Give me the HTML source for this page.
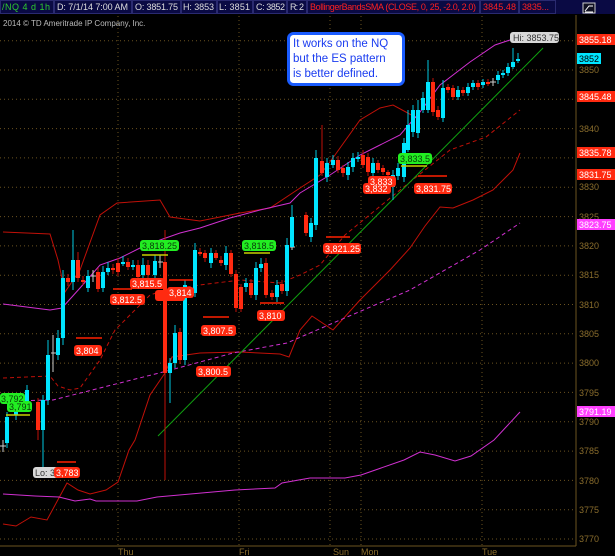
<!DOCTYPE html>
<html><head><meta charset="utf-8"><style>
html,body{margin:0;padding:0;background:#000;width:615px;height:556px;overflow:hidden}
svg{display:block;font-family:"Liberation Sans",sans-serif}
</style></head><body>
<svg width="615" height="556" xmlns="http://www.w3.org/2000/svg">
<rect width="615" height="556" fill="#000"/>
<!-- header -->
<rect x="0" y="0" width="615" height="14" fill="#0a0a44"/>
<g fill="none" stroke="#2a2a70"><rect x="0.5" y="0.5" width="53" height="13"/><rect x="54.5" y="0.5" width="77" height="13"/><rect x="132.5" y="0.5" width="48" height="13"/><rect x="181.5" y="0.5" width="35" height="13"/><rect x="217.5" y="0.5" width="35" height="13"/><rect x="253.5" y="0.5" width="33" height="13"/><rect x="287.5" y="0.5" width="19" height="13"/><rect x="307.5" y="0.5" width="172" height="13"/><rect x="480.5" y="0.5" width="38" height="13"/><rect x="519.5" y="0.5" width="36" height="13"/></g>
<g font-size="9" fill="#ddd">
<text x="2" y="10" fill="#2ecc2e" textLength="48">/NQ 4 d 1h</text>
<text x="57" y="10" textLength="71">D: 7/1/14 7:00 AM</text>
<text x="135" y="10" textLength="43">O: 3851.75</text>
<text x="183" y="10" textLength="31">H: 3853</text>
<text x="219" y="10" textLength="31">L: 3851</text>
<text x="256" y="10" textLength="29">C: 3852</text>
<text x="290" y="10" textLength="14">R: 2</text>
<text x="310" y="10" fill="#ff2020" textLength="166">BollingerBandsSMA (CLOSE, 0, 25, -2.0, 2.0)</text>
<text x="483" y="10" fill="#ff2020" textLength="33">3845.48</text>
<text x="522" y="10" fill="#ff2020" textLength="27">3835...</text>
</g>
<rect x="583" y="3" width="12" height="10" fill="#112" stroke="#ccc" stroke-width="1"/>
<path d="M585 11 L589 6 L593 6 M585 12 H593" stroke="#fff" fill="none"/>
<text x="3" y="26" font-size="8" fill="#bbb">2014 © TD Ameritrade IP Company, Inc.</text>
<!-- grid -->
<g stroke="#6b5320" stroke-width="1" stroke-dasharray="1,3">
<line x1="118" y1="16" x2="118" y2="546"/><line x1="239" y1="16" x2="239" y2="546"/><line x1="330" y1="16" x2="330" y2="546"/><line x1="361" y1="16" x2="361" y2="546"/><line x1="482" y1="16" x2="482" y2="546"/>
<line x1="0" y1="40.7" x2="576" y2="40.7"/><line x1="0" y1="70" x2="576" y2="70"/><line x1="0" y1="99.3" x2="576" y2="99.3"/><line x1="0" y1="128.6" x2="576" y2="128.6"/><line x1="0" y1="157.9" x2="576" y2="157.9"/><line x1="0" y1="187.3" x2="576" y2="187.3"/><line x1="0" y1="216.6" x2="576" y2="216.6"/><line x1="0" y1="245.9" x2="576" y2="245.9"/><line x1="0" y1="275.2" x2="576" y2="275.2"/><line x1="0" y1="304.5" x2="576" y2="304.5"/><line x1="0" y1="333.8" x2="576" y2="333.8"/><line x1="0" y1="363.1" x2="576" y2="363.1"/><line x1="0" y1="392.4" x2="576" y2="392.4"/><line x1="0" y1="421.8" x2="576" y2="421.8"/><line x1="0" y1="451.1" x2="576" y2="451.1"/><line x1="0" y1="480.4" x2="576" y2="480.4"/><line x1="0" y1="509.7" x2="576" y2="509.7"/><line x1="0" y1="539" x2="576" y2="539"/>
</g>
<g font-size="9" fill="#8a6d2c">
<text x="579" y="73">3850</text><text x="579" y="132">3840</text><text x="579" y="190">3830</text><text x="579" y="220">3825</text><text x="579" y="249">3820</text><text x="579" y="278">3815</text><text x="579" y="308">3810</text><text x="579" y="337">3805</text><text x="579" y="366">3800</text><text x="579" y="396">3795</text><text x="579" y="425">3790</text><text x="579" y="454">3785</text><text x="579" y="484">3780</text><text x="579" y="513">3775</text><text x="579" y="542">3770</text>
<text x="118" y="555">Thu</text><text x="239" y="555">Fri</text><text x="333" y="555">Sun</text><text x="361" y="555">Mon</text><text x="482" y="555">Tue</text>
</g>
<line x1="576" y1="15" x2="576" y2="546" stroke="#6b5320"/>
<line x1="0" y1="546" x2="576" y2="546" stroke="#6b5320"/>
<!-- bands -->
<g fill="none" stroke-width="1">
<polyline stroke="#c01008" points="3,232 50,234 58,260 65,292 80,270 100,215 117,203 160,200 170,217 200,221 240,213 270,208 300,188 320,175 335,155 360,120 380,108 393,105 417,118"/>
<polyline stroke="#c01008" points="3,524 16,526 31,517 47,520 67,483 78,490 90,494 106,490 118,482 129,450 135,440 150,395 165,373 172,357 200,353 240,352 280,354 289,357 300,330 312,316 333,330 360,300 390,270 410,248 425,226 440,207 453,208 473,200 493,190 513,170 520,153"/>
<polyline stroke="#c01008" stroke-dasharray="4,3" points="3,378 50,376 58,386 70,390 80,388 100,360 115,330 150,295 165,290 200,285 240,280 280,283 300,275 320,265 345,235 400,190 450,150 486,137 520,110"/>
<polyline stroke="#d030d0" points="3,304 50,310 62,308 80,288 100,265 120,258 140,248 160,240 180,233 200,228 230,218 260,210 290,203 300,193 330,175 360,155 380,145 400,135 420,112 440,85 470,62 495,45 510,40"/>
<polyline stroke="#d030d0" stroke-dasharray="4,3" points="3,401 53,400 100,388 167,371 233,353 287,343 347,317 410,290 480,250 520,223"/>
<polyline stroke="#d030d0" points="3,494 35,496 59,497 75,501 90,499 96,501 137,501 157,497 235,490 275,488 282,483 310,478 322,478 345,478 361,475 404,460 420,452 435,455 455,461 471,456 494,440 520,412"/>
<line x1="158" y1="436" x2="543" y2="48" stroke="#10a010"/>
</g>
<!-- wicks -->
<g stroke-width="1">
<path stroke="#00c8e0" d="M7 412V448 M16 398V420 M27 385V412 M43 395V470 M48 340V405 M58 330V360 M63 270V345 M73 230V290 M88 270V292 M103 266V292 M108 262V275 M123 256V266 M133 260V270 M143 258V280 M155 255V280 M170 358V403 M175 325V368 M185 280V365 M195 243V297 M211 248V268 M226 246V270 M246 278V292 M256 262V300 M261 258V272 M277 280V302 M287 238V296 M292 205V250 M311 218V242 M316 150V230 M327 158V182 M333 155V168 M348 162V180 M353 153V172 M358 152V162 M373 158V178 M393 170V200 M398 163V180 M404 138V182 M408 110V152 M413 105V137 M418 100V138 M423 92V113 M428 60V113 M443 80V122 M458 86V100 M468 83V96 M473 80V90 M483 79V88 M498 71V84 M503 70V78 M508 63V76 M513 48V69 M518 53V63"/>
<path stroke="#c01008" d="M38 398V440 M68 274V286 M78 252V282 M83 276V285 M98 268V292 M113 264V274 M118 258V276 M128 258V270 M138 260V280 M148 260V280 M165 230V480 M180 328V364 M200 248V256 M205 250V262 M216 250V260 M221 256V266 M231 250V277 M236 270V312 M241 284V312 M251 279V298 M266 258V298 M272 290V300 M282 280V294 M306 212V236 M322 125V176 M338 156V173 M343 165V177 M363 150V168 M368 153V176 M378 160V173 M383 165V175 M388 170V178 M433 78V116 M438 106V120 M448 84V93 M453 85V100 M463 87V96 M478 80V90 M488 79V86"/>
<path stroke="#ccc" d="M3 440V452 M0 446H6 M53 335V372 M51 353H56 M93 270V282 M91 276H96 M160 255V268 M158 262H163 M292 244V250 M290 247H295 M493 78V86 M490 82H496"/>
</g>
<!-- bodies cyan -->
<g fill="#00e5ff">
<rect x="5" y="417" width="4" height="26"/><rect x="14" y="405" width="4" height="10"/><rect x="25" y="390" width="4" height="17"/><rect x="41" y="400" width="4" height="30"/><rect x="46" y="355" width="4" height="45"/><rect x="56" y="338" width="4" height="17"/><rect x="61" y="278" width="4" height="60"/><rect x="71" y="260" width="4" height="22"/><rect x="86" y="276" width="4" height="12"/><rect x="101" y="272" width="4" height="16"/><rect x="106" y="268" width="4" height="4"/><rect x="121" y="262" width="4" height="2"/><rect x="131" y="265" width="4" height="2"/><rect x="141" y="265" width="4" height="10"/><rect x="153" y="261" width="4" height="14"/><rect x="168" y="363" width="4" height="10"/><rect x="173" y="333" width="4" height="30"/><rect x="183" y="285" width="4" height="75"/><rect x="193" y="250" width="4" height="43"/><rect x="209" y="253" width="4" height="10"/><rect x="224" y="253" width="4" height="12"/><rect x="244" y="283" width="4" height="4"/><rect x="254" y="268" width="4" height="27"/><rect x="259" y="264" width="4" height="4"/><rect x="275" y="285" width="4" height="12"/><rect x="285" y="245" width="4" height="46"/><rect x="290" y="217" width="4" height="30"/><rect x="309" y="223" width="4" height="14"/><rect x="314" y="158" width="4" height="67"/><rect x="325" y="163" width="4" height="14"/><rect x="331" y="160" width="4" height="5"/><rect x="346" y="167" width="4" height="8"/><rect x="351" y="158" width="4" height="9"/><rect x="356" y="157" width="4" height="2"/><rect x="371" y="163" width="4" height="10"/><rect x="391" y="175" width="4" height="12"/><rect x="396" y="168" width="4" height="8"/><rect x="402" y="143" width="4" height="34"/><rect x="406" y="125" width="4" height="25"/><rect x="411" y="110" width="4" height="22"/><rect x="416" y="110" width="4" height="23"/><rect x="421" y="98" width="4" height="12"/><rect x="426" y="82" width="4" height="28"/><rect x="441" y="88" width="4" height="30"/><rect x="456" y="90" width="4" height="7"/><rect x="466" y="87" width="4" height="6"/><rect x="471" y="83" width="4" height="4"/><rect x="481" y="82" width="4" height="3"/><rect x="496" y="75" width="4" height="5"/><rect x="501" y="73" width="4" height="2"/><rect x="506" y="67" width="4" height="6"/><rect x="511" y="62" width="4" height="5"/><rect x="516" y="59" width="4" height="2"/>
</g>
<g fill="#ff2a10">
<rect x="36" y="402" width="4" height="28"/><rect x="66" y="278" width="4" height="4"/><rect x="76" y="260" width="4" height="18"/><rect x="81" y="280" width="4" height="2"/><rect x="96" y="272" width="4" height="17"/><rect x="111" y="268" width="4" height="2"/><rect x="116" y="263" width="4" height="9"/><rect x="126" y="262" width="4" height="5"/><rect x="136" y="265" width="4" height="12"/><rect x="146" y="265" width="4" height="10"/><rect x="163" y="262" width="4" height="111"/><rect x="178" y="332" width="4" height="28"/><rect x="198" y="252" width="4" height="2"/><rect x="203" y="253" width="4" height="5"/><rect x="214" y="253" width="4" height="5"/><rect x="219" y="260" width="4" height="3"/><rect x="229" y="253" width="4" height="21"/><rect x="234" y="274" width="4" height="34"/><rect x="239" y="287" width="4" height="22"/><rect x="249" y="283" width="4" height="12"/><rect x="264" y="263" width="4" height="32"/><rect x="270" y="293" width="4" height="4"/><rect x="280" y="284" width="4" height="7"/><rect x="304" y="215" width="4" height="18"/><rect x="320" y="161" width="4" height="12"/><rect x="336" y="160" width="4" height="10"/><rect x="341" y="168" width="4" height="5"/><rect x="361" y="155" width="4" height="10"/><rect x="366" y="157" width="4" height="15"/><rect x="376" y="163" width="4" height="7"/><rect x="381" y="168" width="4" height="4"/><rect x="386" y="172" width="4" height="3"/><rect x="431" y="82" width="4" height="30"/><rect x="436" y="110" width="4" height="7"/><rect x="446" y="87" width="4" height="3"/><rect x="451" y="88" width="4" height="9"/><rect x="461" y="90" width="4" height="3"/><rect x="476" y="83" width="4" height="4"/><rect x="486" y="82" width="4" height="2"/>
</g>
<!-- level lines -->
<g stroke-width="1.5">
<line x1="142" y1="255" x2="168" y2="255" stroke="#c8d000"/>
<line x1="244" y1="253" x2="270" y2="253" stroke="#c8d000"/>
<line x1="401" y1="166" x2="427" y2="166" stroke="#c8d000"/>
<line x1="6" y1="415" x2="30" y2="415" stroke="#c8d000"/>
<line x1="113" y1="289" x2="132" y2="289" stroke="#ff2000"/>
<line x1="76" y1="338" x2="102" y2="338" stroke="#ff2000"/>
<line x1="203" y1="317" x2="229" y2="317" stroke="#ff2000"/>
<line x1="169" y1="280" x2="193" y2="280" stroke="#ff2000"/>
<line x1="418" y1="176" x2="447" y2="176" stroke="#ff2000"/>
<line x1="326" y1="237" x2="350" y2="237" stroke="#ff2000"/>
<line x1="260" y1="303" x2="284" y2="303" stroke="#ff2000"/>
<line x1="57" y1="462" x2="76" y2="462" stroke="#ff2000"/>
</g>
<!-- bubbles -->
<g font-size="9">
<g fill="#22ee22"><rect x="140" y="240" width="39" height="11" rx="3"/><rect x="242" y="240" width="34" height="11" rx="3"/><rect x="398" y="153" width="34" height="11" rx="3"/><rect x="0" y="393" width="25" height="11" rx="3"/><rect x="7" y="401" width="25" height="11" rx="3"/></g>
<g fill="#0a3a0a"><text x="142" y="249">3,818.25</text><text x="244" y="249">3,818.5</text><text x="400" y="162">3,833.5</text><text x="1" y="402">3,792</text><text x="9" y="410">3,791</text></g>
<g fill="#ff2a10"><rect x="130" y="278" width="35" height="11" rx="3"/><rect x="110" y="294" width="35" height="11" rx="3"/><rect x="155" y="290" width="30" height="11" rx="3"/><rect x="167" y="287" width="27" height="11" rx="3"/><rect x="201" y="325" width="35" height="11" rx="3"/><rect x="74" y="345" width="28" height="11" rx="3"/><rect x="196" y="366" width="35" height="11" rx="3"/><rect x="257" y="310" width="28" height="11" rx="3"/><rect x="323" y="243" width="38" height="11" rx="3"/><rect x="363" y="183" width="28" height="11" rx="3"/><rect x="368" y="176" width="28" height="11" rx="3"/><rect x="414" y="183" width="38" height="11" rx="3"/></g>
<g fill="#fff"><text x="132" y="287">3,815.5</text><text x="112" y="303">3,812.5</text><text x="169" y="296">3,814</text><text x="203" y="334">3,807.5</text><text x="76" y="354">3,804</text><text x="198" y="375">3,800.5</text><text x="259" y="319">3,810</text><text x="325" y="252">3,821.25</text><text x="365" y="192">3,832</text><text x="370" y="185">3,833</text><text x="416" y="192">3,831.75</text></g>
</g>
<!-- annotation -->
<rect x="288.5" y="33.5" width="115" height="51" rx="5" fill="#fff" stroke="#1a5cff" stroke-width="3"/>
<g font-size="11.5" fill="#1a3cf0"><text x="293" y="47">It works on the NQ</text><text x="293" y="62">but the ES pattern</text><text x="293" y="77">is better defined.</text></g>
<!-- Hi / Lo -->
<rect x="510" y="32" width="49" height="11" rx="3" fill="#d8d8d8"/>
<text x="513" y="41" font-size="9" fill="#333">Hi: 3853.75</text>
<rect x="33" y="467" width="26" height="11" rx="3" fill="#d8d8d8"/>
<text x="35" y="476" font-size="9" fill="#333">Lo: 3</text>
<rect x="54" y="467" width="26" height="11" rx="3" fill="#ff2a10"/>
<text x="56" y="476" font-size="9" fill="#fff">3,783</text>
<!-- right labels -->
<g font-size="9">
<rect x="577" y="34" width="38" height="11" fill="#ff2a10"/><text x="579" y="43" fill="#fff">3855.18</text>
<rect x="577" y="53" width="24" height="11" fill="#00e5ff"/><text x="579" y="62" fill="#000">3852</text>
<rect x="577" y="91" width="38" height="11" fill="#ff2a10"/><text x="579" y="100" fill="#fff">3845.48</text>
<rect x="577" y="147" width="38" height="11" fill="#ff2a10"/><text x="579" y="156" fill="#fff">3835.78</text>
<rect x="577" y="169" width="38" height="11" fill="#ff2a10"/><text x="579" y="178" fill="#fff">3831.75</text>
<rect x="577" y="219" width="38" height="11" fill="#ff40ff"/><text x="579" y="228" fill="#fff">3823.75</text>
<rect x="577" y="406" width="38" height="11" fill="#ff40ff"/><text x="579" y="415" fill="#fff">3791.19</text>
</g>
</svg>
</body></html>
